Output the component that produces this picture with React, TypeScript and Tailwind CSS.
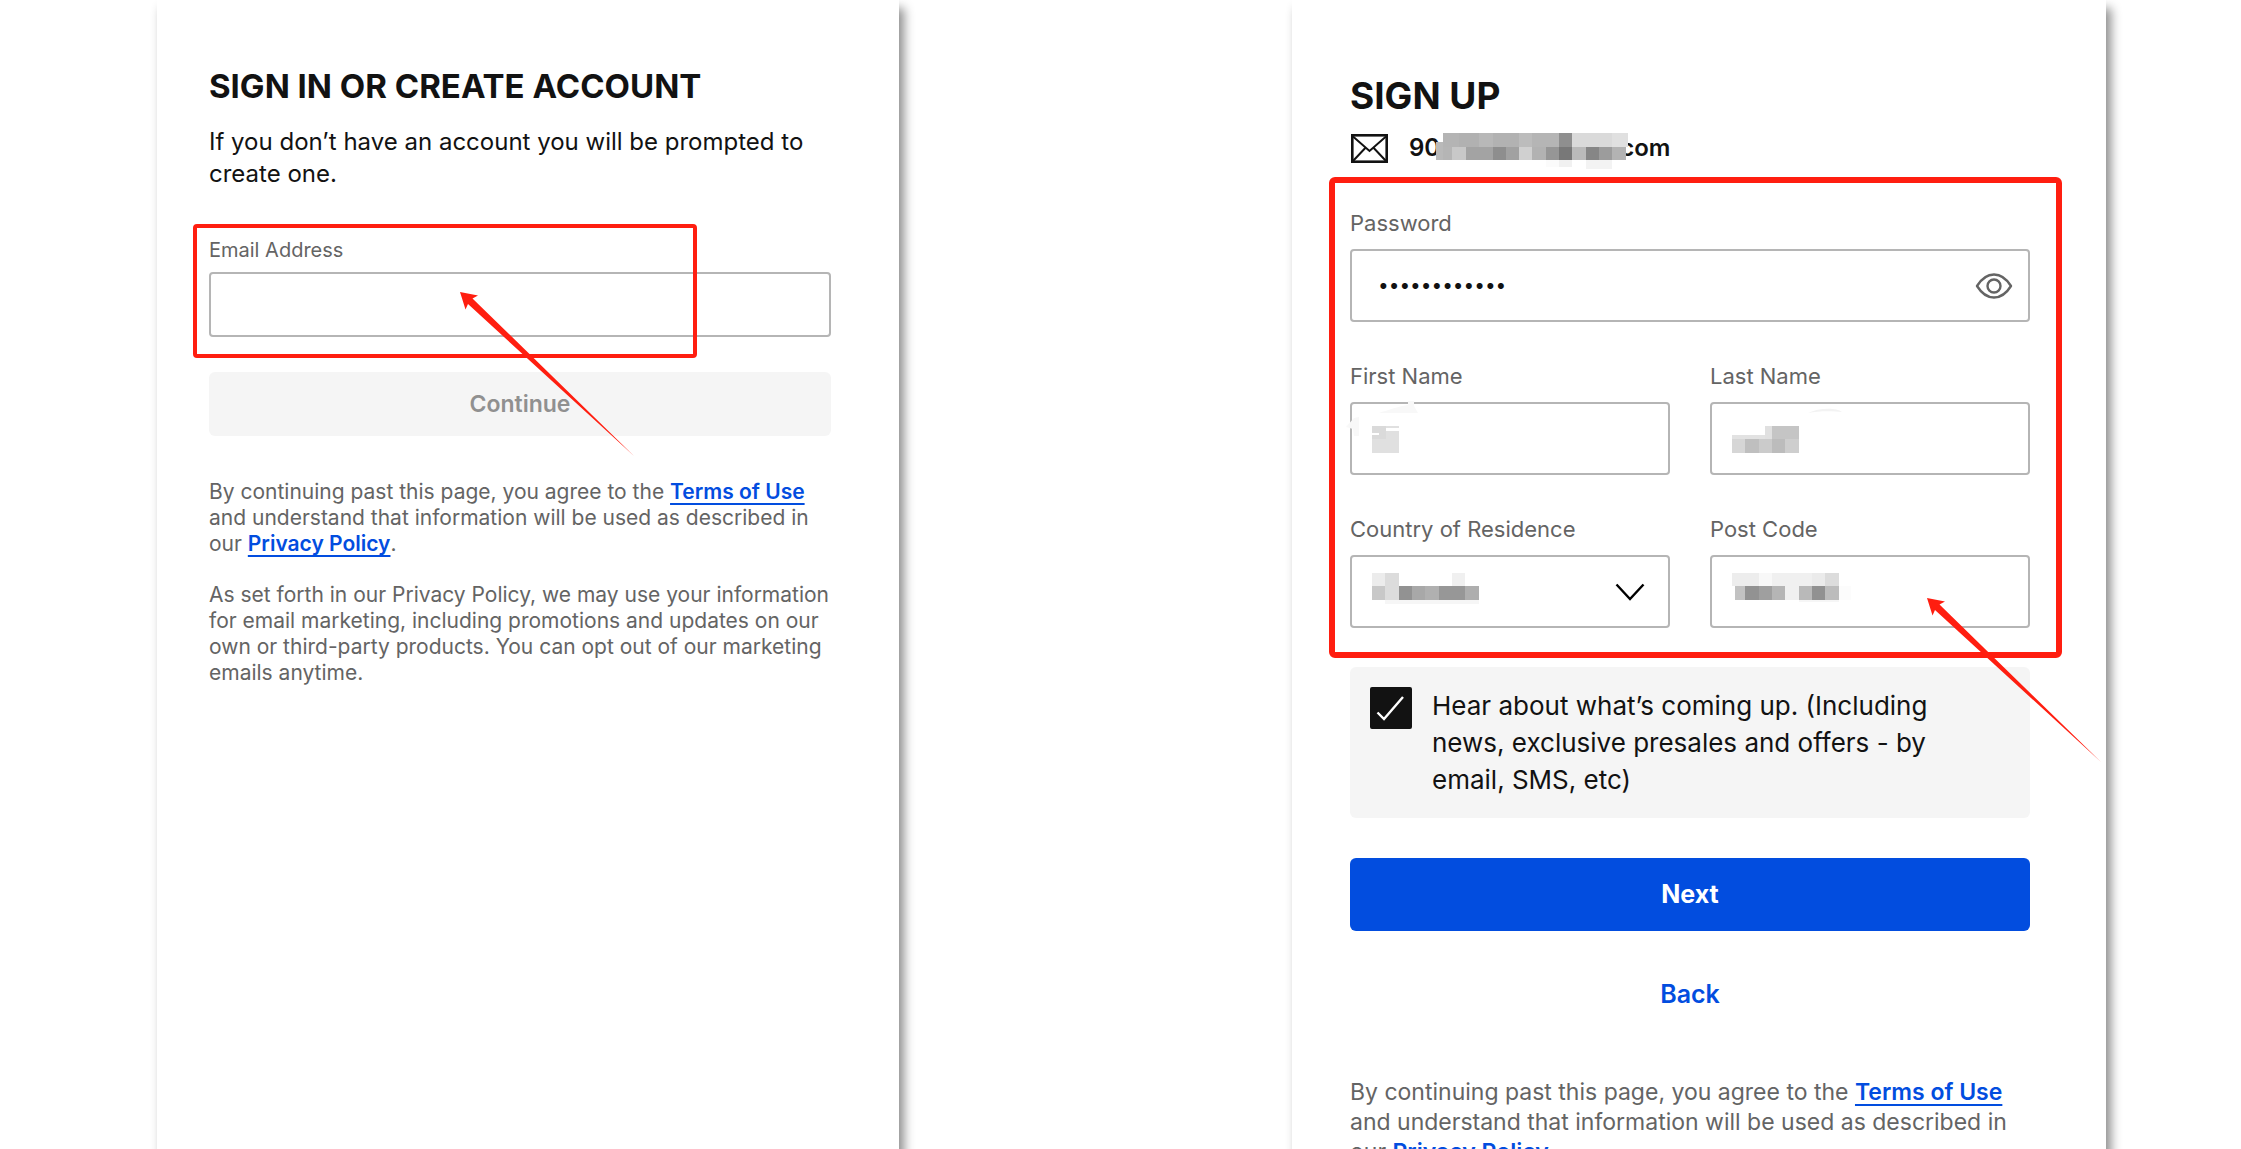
import React, { useState } from 'react';
import { clsx } from 'clsx';

type Cell = [x: number, y: number, w: number, h: number, fill: string];

// Redaction blocks, three units to a pixel
const EMAIL_CELLS: Cell[] = [
  [20, 0, 50, 41, '#b4b4b4'],
  [70, 0, 60, 41, '#b1b1b1'],
  [130, 0, 40, 41, '#b8b8b8'],
  [170, 0, 79, 41, '#b2b2b2'],
  [249, 0, 40, 41, '#bcbcbc'],
  [289, 0, 80, 41, '#b5b5b5'],
  [369, 0, 40, 41, '#8f8f8f'],
  [409, 0, 120, 41, '#dadada'],
  [529, 0, 47, 41, '#e0e0e0'],
  [0, 28, 20, 53, '#b9b9b9'],
  [20, 41, 29, 40, '#b5b5b5'],
  [49, 41, 41, 40, '#c8c8c8'],
  [90, 41, 80, 40, '#a3a3a3'],
  [170, 41, 39, 40, '#8e8e8e'],
  [209, 41, 40, 40, '#a1a1a1'],
  [249, 41, 40, 40, '#d0d0d0'],
  [289, 41, 41, 40, '#b2b2b2'],
  [330, 41, 39, 40, '#969696'],
  [369, 41, 40, 40, '#787878'],
  [409, 41, 40, 40, '#bababa'],
  [449, 41, 40, 40, '#868686'],
  [489, 41, 40, 40, '#9c9c9c'],
  [529, 41, 40, 40, '#b3b3b3'],
  [369, 81, 40, 22, '#f1f1f1'],
  [330, 81, 39, 22, '#fbfbfb'],
  [449, 81, 80, 27, '#f3f3f3'],
];

const FIRST_NAME_CELLS: Cell[] = [
  [0, 0, 80, 80, '#e0e0e0'],
  [0, 0, 42, 40, '#dadada'],
  [42, 6, 38, 8, '#ffffff'],
  [0, 20, 20, 7, '#ffffff'],
];

const LAST_NAME_CELLS: Cell[] = [
  [0, 28, 100, 12, '#e2e2e2'],
  [100, 0, 20, 40, '#e0e0e0'],
  [120, 0, 80, 40, '#c5c5c5'],
  [0, 40, 40, 40, '#d6d6d6'],
  [40, 40, 40, 40, '#bfbfbf'],
  [80, 40, 40, 40, '#cbcbcb'],
  [120, 40, 40, 40, '#bcbcbc'],
  [160, 40, 40, 40, '#cecece'],
];

const COUNTRY_CELLS: Cell[] = [
  [0, 0, 40, 40, '#ececec'],
  [40, 0, 40, 80, '#dcdcdc'],
  [240, 0, 40, 40, '#f0f0f0'],
  [0, 40, 40, 40, '#c8c8c8'],
  [80, 40, 40, 40, '#929292'],
  [120, 40, 40, 40, '#a8a8a8'],
  [160, 40, 40, 40, '#b0b0b0'],
  [200, 40, 80, 40, '#979797'],
  [280, 40, 40, 40, '#aeaeae'],
  [40, 80, 280, 14, '#f6f6f6'],
];

const POST_CODE_CELLS: Cell[] = [
  [0, 0, 80, 40, '#ededed'],
  [80, 0, 40, 40, '#f8f8f8'],
  [120, 0, 120, 40, '#f0f0f0'],
  [240, 0, 40, 40, '#ebebeb'],
  [280, 0, 40, 40, '#dcdcdc'],
  [8, 40, 32, 40, '#c2c2c2'],
  [40, 40, 40, 40, '#929292'],
  [80, 40, 40, 40, '#9f9f9f'],
  [120, 40, 40, 40, '#b5b5b5'],
  [160, 40, 40, 40, '#f0f0f0'],
  [200, 40, 40, 40, '#b9b9b9'],
  [240, 40, 40, 40, '#919191'],
  [280, 40, 40, 40, '#bcbcbc'],
  [320, 40, 38, 40, '#fcfcfc'],
  [200, 80, 120, 8, '#f6f6f6'],
];

function Mosaic({ cells, width, height, className }: { cells: Cell[]; width: number; height: number; className?: string }) {
  return (
    <svg
      width={width}
      height={height}
      viewBox={`0 0 ${width * 3} ${height * 3}`}
      shapeRendering="crispEdges"
      className={clsx('pointer-events-none shrink-0', className)}
      aria-hidden="true"
    >
      {cells.map(([x, y, w, h, fill]) => (
        <rect key={`${x}-${y}-${w}`} x={x} y={y} width={w} height={h} fill={fill} />
      ))}
    </svg>
  );
}

function Arrow({ className }: { className: string }) {
  return (
    <svg width="176" height="166" viewBox="0 0 176 166" className={clsx('pointer-events-none absolute', className)} aria-hidden="true">
      <path d="M0 0 L18 3.5 L12.5 6.5 L174 164 L8 12 L5.5 17.5 Z" fill="#ff1e10" />
    </svg>
  );
}

interface FieldProps {
  id: string;
  label: string;
  children: React.ReactNode;
}

function Field({ id, label, children }: FieldProps) {
  return (
    <div className="flex flex-col gap-3">
      <label htmlFor={id} className="text-[22px] leading-7 text-[#646464]">{label}</label>
      <div className="relative flex">{children}</div>
    </div>
  );
}

const fieldClass = 'h-[73px] w-full min-w-0 appearance-none rounded-sm border-2 border-[#b5b5b5] bg-white px-[26px] text-[19px] text-[#121212] outline-none';
const linkClass = 'font-semibold text-[#024ddf] underline decoration-2 underline-offset-4';

function Terms() {
  return (
    <>
      By continuing past this page, you agree to the{' '}
      <a href="#terms" className={linkClass}>Terms of Use</a> and understand that information will be used as described in our{' '}
      <a href="#privacy" className={linkClass}>Privacy Policy</a>.
    </>
  );
}

function SignIn() {
  return (
    <section className="col-start-2 bg-white pt-[66px] pr-[68px] pl-[52px] shadow-[5px_8px_10px_rgba(0,0,0,0.45)]">
      <h1 className="text-[33px] leading-10 font-bold text-[#121212]">SIGN IN OR CREATE ACCOUNT</h1>
      <p className="mt-5 text-2xl leading-8 text-[#121212]">
        If you don’t have an account you will be prompted to create one.
      </p>
      <div className="relative mt-12 flex flex-col gap-[10px]">
        <label htmlFor="email" className="text-xl leading-6 text-[#646464]">Email Address</label>
        <input id="email" type="email" className="h-[65px] w-full rounded-sm border-2 border-[#b5b5b5] bg-white px-4 text-xl outline-none" />
        <div className="pointer-events-none absolute -top-[14px] -bottom-[21px] -left-4 w-[504px] rounded-sm border-4 border-[#ff1e10]" />
        <Arrow className="top-[54px] left-[251px] z-10" />
      </div>
      <button type="button" disabled className="mt-[35px] h-16 w-full rounded-md bg-[#f5f5f5] text-[23px] font-semibold text-[#909090]">
        Continue
      </button>
      <p className="mt-[43px] text-[21px] leading-[26px] text-[#646464]"><Terms /></p>
      <p className="mt-[25px] text-[21px] leading-[26px] text-[#646464]">
        As set forth in our Privacy Policy, we may use your information for email marketing, including promotions and updates on our own or third-party products. You can opt out of our marketing emails anytime.
      </p>
    </section>
  );
}

function SignUp() {
  const [showPassword, setShowPassword] = useState(false);
  const [optIn, setOptIn] = useState(true);

  return (
    <section className="relative col-start-4 bg-white pt-[74px] pr-[76px] pl-[58px] shadow-[5px_8px_10px_rgba(0,0,0,0.45)]">
      <h1 className="text-[37px] leading-11 font-bold text-[#121212]">SIGN UP</h1>
      <div className="mt-[14px] flex h-8 items-center">
        <svg width="39" height="31" viewBox="0 0 39 31" fill="none" stroke="#121212" strokeWidth="2.6" aria-hidden="true">
          <rect x="2.3" y="2.3" width="34.4" height="26.4" />
          <path d="M3 3.5 L19.5 18 L36 3.5 M3 28 L15.5 14.8 M36 28 L23.5 14.8" strokeWidth="2" />
        </svg>
        <span className="ml-5 text-2xl leading-8 font-semibold text-[#121212]">90</span>
        <Mosaic cells={EMAIL_CELLS} width={192} height={36} className="relative mt-[6px] -ml-1" />
        <span className="-ml-2 text-2xl leading-8 font-semibold text-[#121212]">com</span>
      </div>

      <div className="relative mt-[45px] flex flex-col gap-10">
        <Field id="password" label="Password">
          <input
            id="password"
            type={showPassword ? 'text' : 'password'}
            defaultValue="abcdefghijkl"
            className={fieldClass}
          />
          <button
            type="button"
            aria-label="Show password"
            onClick={() => setShowPassword(!showPassword)}
            className="absolute inset-y-0 right-4 flex items-center"
          >
            <svg width="40" height="28" viewBox="0 0 40 28" fill="none" stroke="#646464" strokeWidth="2.4" strokeLinejoin="round">
              <path d="M3 14 C8 6 14 2.5 20 2.5 C26 2.5 32 6 37 14 C32 22 26 25.5 20 25.5 C14 25.5 8 22 3 14 Z" />
              <circle cx="20" cy="14" r="6.5" />
            </svg>
          </button>
        </Field>
        <div className="grid grid-cols-2 gap-10">
          <Field id="first-name" label="First Name">
            <input id="first-name" type="text" className={fieldClass} />
            <Mosaic cells={FIRST_NAME_CELLS} width={27} height={27} className="absolute top-6 left-[22px]" />
            <svg width="76" height="38" viewBox="0 0 76 38" className="pointer-events-none absolute -top-1 -left-1" aria-hidden="true">
              <path d="M62 3 H68 V8 L72 15 H33 C42 12 54 8 62 7 Z M0 29 L8 20 L13 19 V39 H8 L7 31 Z" fill="#f8f8f8" />
            </svg>
          </Field>
          <Field id="last-name" label="Last Name">
            <input id="last-name" type="text" className={fieldClass} />
            <Mosaic cells={LAST_NAME_CELLS} width={67} height={27} className="absolute top-6 left-[22px]" />
            <svg width="34" height="6" viewBox="0 0 34 6" className="pointer-events-none absolute top-[6px] left-[98px]" aria-hidden="true">
              <path d="M0 5 C10 0 28 -1 34 4 C24 3 10 3 0 5 Z" fill="#f3f3f3" />
            </svg>
          </Field>
          <Field id="country" label="Country of Residence">
            <select id="country" className={fieldClass}>
              <option />
            </select>
            <Mosaic cells={COUNTRY_CELLS} width={107} height={32} className="absolute top-[18px] left-[22px]" />
            <svg width="30" height="18" viewBox="0 0 30 18" fill="none" stroke="#000" strokeWidth="2.4" className="pointer-events-none absolute top-7 right-[25px]" aria-hidden="true">
              <path d="M1.5 1.5 L15 16 L28.5 1.5" />
            </svg>
          </Field>
          <Field id="post-code" label="Post Code">
            <input id="post-code" type="text" className={fieldClass} />
            <Mosaic cells={POST_CODE_CELLS} width={120} height={30} className="absolute top-[18px] left-[22px]" />
          </Field>
        </div>
        <div className="pointer-events-none absolute -top-8 -right-8 -bottom-[30px] -left-[21px] rounded-md border-6 border-[#ff1e10]" />
        <Arrow className="-right-[73px] -bottom-[136px] z-10" />
      </div>

      <label className="mt-[39px] flex items-start gap-5 rounded-md bg-[#f5f5f5] p-5">
        <span className="relative flex shrink-0">
          <input
            type="checkbox"
            checked={optIn}
            onChange={() => setOptIn(!optIn)}
            className="size-[42px] appearance-none rounded-xs border-2 border-[#121212] bg-white checked:bg-[#121212]"
          />
          {optIn && (
            <svg width="42" height="42" viewBox="0 0 42 42" fill="none" stroke="#fff" strokeWidth="2.4" className="pointer-events-none absolute inset-0">
              <path d="M7.5 25.5 L14 32 L33 10" />
            </svg>
          )}
        </span>
        <span className="pr-12 text-[26px] leading-[37px] text-[#121212]">
          Hear about what’s coming up. (Including news, exclusive presales and offers - by email, SMS, etc)
        </span>
      </label>

      <button type="button" className="mt-10 h-[73px] w-full rounded-md bg-[#024ddf] text-[25px] font-bold text-white">Next</button>
      <button type="button" className="mt-[47px] block w-full text-[25px] leading-8 font-semibold text-[#024ddf]">Back</button>
      <p className="mt-[67px] text-[23px] leading-[30px] text-[#646464]"><Terms /></p>
      <div className="pointer-events-none absolute inset-x-0 bottom-0 h-3 bg-linear-to-b from-transparent to-black/12" />
    </section>
  );
}

export default function App() {
  return (
    <main className="grid h-screen grid-cols-[157fr_742fr_393fr_814fr_135fr] overflow-hidden bg-white font-['Inter','Liberation_Sans',sans-serif]">
      <SignIn />
      <SignUp />
    </main>
  );
}
